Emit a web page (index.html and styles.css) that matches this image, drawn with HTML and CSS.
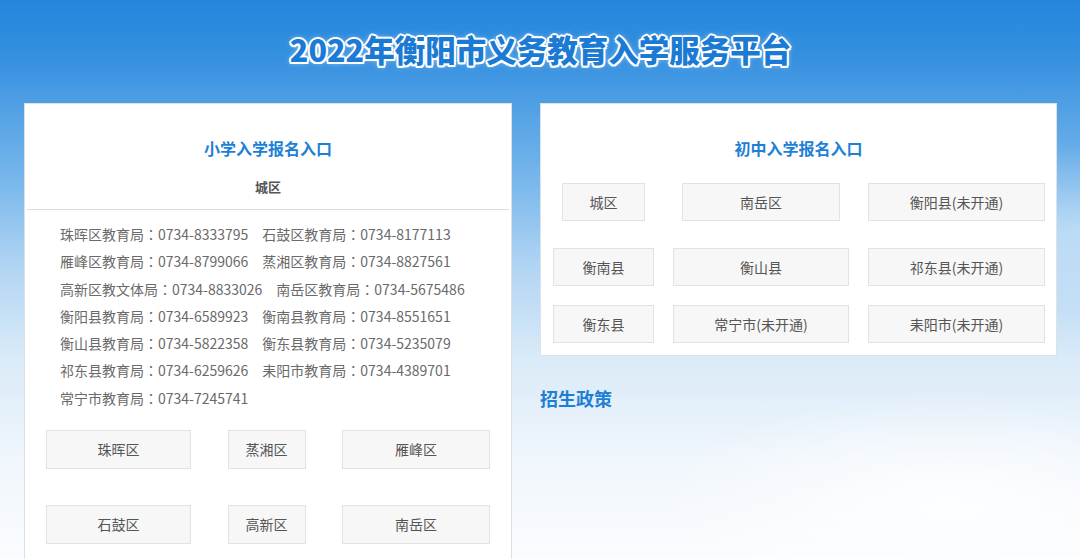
FILE: index.html
```html
<!DOCTYPE html>
<html lang="zh-CN">

<head>
    <meta charset="UTF-8" />
    <meta name="viewport" content="width=device-width, initial-scale=1.0" />
    <title>2022年衡阳市义务教育入学服务平台</title>
    <link rel="stylesheet" href="styles.css">
</head>

<body>
    <div class="page">
        <h1 class="site-title">2022年衡阳市义务教育入学服务平台</h1>

        <div class="main">
            <!-- 小学 -->
            <div class="card card-primary">
                <h2 class="card-title">小学入学报名入口</h2>
                <div class="sub-title">城区</div>
                <div class="phone-list">
                    <p>珠晖区教育局<span class="colon">：</span>0734-8333795　石鼓区教育局<span class="colon">：</span>0734-8177113</p>
                    <p>雁峰区教育局<span class="colon">：</span>0734-8799066　蒸湘区教育局<span class="colon">：</span>0734-8827561</p>
                    <p>高新区教文体局<span class="colon">：</span>0734-8833026　南岳区教育局<span class="colon">：</span>0734-5675486</p>
                    <p>衡阳县教育局<span class="colon">：</span>0734-6589923　衡南县教育局<span class="colon">：</span>0734-8551651</p>
                    <p>衡山县教育局<span class="colon">：</span>0734-5822358　衡东县教育局<span class="colon">：</span>0734-5235079</p>
                    <p>祁东县教育局<span class="colon">：</span>0734-6259626　耒阳市教育局<span class="colon">：</span>0734-4389701</p>
                    <p>常宁市教育局<span class="colon">：</span>0734-7245741</p>
                </div>
                <div class="btn-grid">
                    <a class="btn">珠晖区</a>
                    <a class="btn">蒸湘区</a>
                    <a class="btn">雁峰区</a>
                    <a class="btn">石鼓区</a>
                    <a class="btn">高新区</a>
                    <a class="btn">南岳区</a>
                </div>
            </div>

            <!-- 初中 -->
            <div class="side">
                <div class="card card-middle">
                    <h2 class="card-title">初中入学报名入口</h2>
                    <div class="btn-row row-first">
                        <a class="btn btn-narrow">城区</a>
                        <a class="btn btn-mid">南岳区</a>
                        <a class="btn">衡阳县(未开通)</a>
                    </div>
                    <div class="btn-row row-second">
                        <a class="btn">衡南县</a>
                        <a class="btn">衡山县</a>
                        <a class="btn">祁东县(未开通)</a>
                    </div>
                    <div class="btn-row row-third">
                        <a class="btn">衡东县</a>
                        <a class="btn">常宁市(未开通)</a>
                        <a class="btn">耒阳市(未开通)</a>
                    </div>
                </div>
                <h3 class="policy-title">招生政策</h3>
            </div>
        </div>
    </div>
</body>

</html>
```

FILE: styles.css
```css
html,
body {
    margin: 0;
    padding: 0;
}

body {
    font-family: "Noto Sans CJK SC", "Microsoft YaHei", sans-serif;
    color: #666;
    min-height: 100vh;
    background:
        radial-gradient(ellipse 420px 160px at 88% 88%, rgba(255, 255, 255, 0.85), rgba(255, 255, 255, 0) 70%),
        radial-gradient(ellipse 300px 120px at 100% 40%, rgba(255, 255, 255, 0.35), rgba(255, 255, 255, 0) 70%),
        linear-gradient(180deg, #2386dc 0%, #3590e0 10%, #4f9fe4 18%, #7ab8ec 32%, #b0d4f3 46%, #d9eaf8 62%, #f0f6fc 80%, #fcfdff 100%);
}

.page {
    padding: 0 23px 0 24px;
}

.site-title {
    margin: 0;
    padding-top: 29px;
    height: 40px;
    line-height: 40px;
    text-align: center;
    font-size: 30.5px;
    font-weight: 900;
    color: #1b7bd4;
    text-shadow:
        -2px 0 #fff, 2px 0 #fff, 0 -2px #fff, 0 2px #fff,
        -1.5px -1.5px #fff, 1.5px 1.5px #fff, -1.5px 1.5px #fff, 1.5px -1.5px #fff,
        0 0 6px rgba(255, 255, 255, 0.7);
}

.main {
    display: flex;
    align-items: flex-start;
    gap: 28px;
    margin-top: 34px;
}

.card {
    background-color: #fff;
    border: 1px solid #dde2e8;
    box-sizing: border-box;
}

.card-primary {
    width: 488px;
    padding-bottom: 30px;
}

.side {
    width: 517px;
}

.card-middle {
    width: 517px;
    padding-bottom: 12px;
}

.card-title {
    margin: 33px 0 0;
    line-height: 22px;
    font-size: 16px;
    font-weight: bold;
    color: #1d7fd6;
    text-align: center;
}

.sub-title {
    margin: 18px 2px 0;
    padding-bottom: 12px;
    line-height: 20px;
    font-size: 13px;
    font-weight: bold;
    color: #555;
    text-align: center;
    border-bottom: 1px solid #dcdcdc;
}

.phone-list {
    padding: 11px 0 0 35px;
}

.phone-list p {
    margin: 0;
    line-height: 27.3px;
    font-size: 14px;
    color: #6a6a6a;
    white-space: nowrap;
}

/* centred full-width colon, as in YaHei */
.colon {
    font-family: "Noto Sans CJK TC", "Noto Sans CJK SC", sans-serif;
    font-feature-settings: "locl" 0;
}

.btn {
    display: block;
    box-sizing: border-box;
    height: 38px;
    line-height: 36px;
    background-color: #f7f7f7;
    border: 1px solid #e2e2e2;
    color: #555;
    font-size: 14px;
    text-align: center;
    cursor: pointer;
    white-space: nowrap;
}

.btn-grid {
    display: grid;
    grid-template-columns: 145px 78px 148px;
    column-gap: 36.5px;
    row-gap: 36px;
    margin-top: 18px;
    padding-left: 21px;
}

.btn-grid .btn {
    height: 39px;
    line-height: 37px;
}

.btn-row {
    display: grid;
    grid-template-columns: 101px 176px 177px;
    column-gap: 19px;
    padding-left: 12px;
}

.row-first {
    margin-top: 24px;
}

.row-second {
    margin-top: 27px;
}

.row-third {
    margin-top: 19px;
}

.btn-narrow {
    width: 83px;
    justify-self: center;
}

.btn-mid {
    width: 158px;
    justify-self: center;
}

.policy-title {
    margin: 30px 0 0;
    line-height: 24px;
    font-size: 18px;
    font-weight: bold;
    color: #1d7fd6;
}
```
